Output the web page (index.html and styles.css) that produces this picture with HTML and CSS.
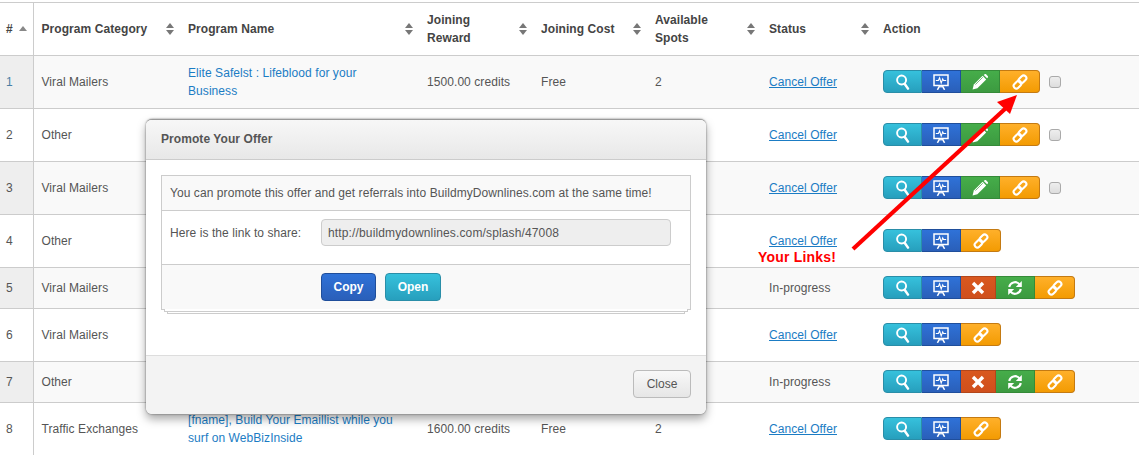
FILE: index.html
```html
<!DOCTYPE html>
<html lang="en">
<head>
<meta charset="utf-8">
<title>Promote Your Offer</title>
<link rel="stylesheet" href="styles.css">
</head>
<body>
<svg class="defs" width="0" height="0" aria-hidden="true">
  <symbol id="i-search" viewBox="0 0 16 16"><circle cx="6.6" cy="6" r="4.5" fill="none" stroke="currentColor" stroke-width="1.9"/><path d="M9.6 9.8 13 14.6" stroke="currentColor" stroke-width="2.5" stroke-linecap="round"/></symbol>
  <symbol id="i-board" viewBox="0 0 16 16"><path d="M1 .9h14v10.6H1z" fill="none" stroke="currentColor" stroke-width="1.5"/><path d="M2.8 6.5h2.6l1.2-2.6 1.6 5.2 1.5-4.2.8 1.6h2.7" fill="none" stroke="currentColor" stroke-width="1.1"/><path d="M8 11.5v2M6.6 12 4.4 15.8M9.4 12l2.2 3.8" stroke="currentColor" stroke-width="1.5"/></symbol>
  <symbol id="i-pencil" viewBox="0 0 16 16"><path d="M.6 15.4 1.8 10.6 10.6 1.8 14.2 5.4 5.4 14.2z" fill="currentColor"/><path d="M11.7.9 12.6.2a1.2 1.2 0 0 1 1.5.1l1.6 1.6a1.2 1.2 0 0 1 .1 1.5l-.7.9z" fill="currentColor"/><path d="M3.4 10.6 10.8 3.2" stroke="#3f9f43" stroke-width=".7"/></symbol>
  <symbol id="i-link" viewBox="0 0 16 16"><g fill="none" stroke="currentColor" stroke-width="2.1"><rect x="6.2" y="2.6" width="8.6" height="5.4" rx="2.7" transform="rotate(-45 10.5 5.3)"/><rect x="1.2" y="8" width="8.6" height="5.4" rx="2.7" transform="rotate(-45 5.5 10.7)"/></g></symbol>
  <symbol id="i-x" viewBox="0 0 16 16"><path d="M3 3l10 10M13 3 3 13" stroke="currentColor" stroke-width="3.4"/></symbol>
  <symbol id="i-sync" viewBox="0 0 16 16"><path d="M2.2 7a5.9 5.9 0 0 1 10.2-2.8" fill="none" stroke="currentColor" stroke-width="2.1"/><path d="M14.8 1V7H8.8z" fill="currentColor"/><path d="M13.8 9a5.9 5.9 0 0 1-10.2 2.8" fill="none" stroke="currentColor" stroke-width="2.1"/><path d="M1.2 15V9H7.2z" fill="currentColor"/></symbol>
</svg>

<table class="offers">
  <colgroup>
    <col class="c-num"><col class="c-cat"><col class="c-name"><col class="c-std"><col class="c-std"><col class="c-std"><col class="c-std"><col class="c-act">
  </colgroup>
  <thead>
    <tr class="tall">
      <th class="num"><span class="head">#<i class="sort up"></i></span></th>
      <th><span class="head">Program Category<i class="sort"></i></span></th>
      <th><span class="head">Program Name<i class="sort"></i></span></th>
      <th><span class="head">Joining<br>Reward<i class="sort"></i></span></th>
      <th><span class="head">Joining Cost<i class="sort"></i></span></th>
      <th><span class="head">Available<br>Spots<i class="sort"></i></span></th>
      <th><span class="head">Status<i class="sort"></i></span></th>
      <th>Action</th>
    </tr>
  </thead>
  <tbody>
    <tr class="tall odd">
      <td class="num first">1</td><td>Viral Mailers</td>
      <td><a class="name" href="#">Elite Safelst : Lifeblood for your Business</a></td>
      <td>1500.00 credits</td><td>Free</td><td>2</td>
      <td><a class="cancel" href="#">Cancel Offer</a></td>
      <td><div class="actions"><div class="group">
        <span class="btn info"><svg><use href="#i-search"/></svg></span><span class="btn blue"><svg><use href="#i-board"/></svg></span><span class="btn green"><svg><use href="#i-pencil"/></svg></span><span class="btn orange"><svg><use href="#i-link"/></svg></span>
      </div><input class="check" type="checkbox"></div></td>
    </tr>
    <tr class="tall">
      <td class="num">2</td><td>Other</td><td></td><td></td><td></td><td></td>
      <td><a class="cancel" href="#">Cancel Offer</a></td>
      <td><div class="actions"><div class="group">
        <span class="btn info"><svg><use href="#i-search"/></svg></span><span class="btn blue"><svg><use href="#i-board"/></svg></span><span class="btn green"><svg><use href="#i-pencil"/></svg></span><span class="btn orange"><svg><use href="#i-link"/></svg></span>
      </div><input class="check" type="checkbox"></div></td>
    </tr>
    <tr class="tall odd">
      <td class="num">3</td><td>Viral Mailers</td><td></td><td></td><td></td><td></td>
      <td><a class="cancel" href="#">Cancel Offer</a></td>
      <td><div class="actions"><div class="group">
        <span class="btn info"><svg><use href="#i-search"/></svg></span><span class="btn blue"><svg><use href="#i-board"/></svg></span><span class="btn green"><svg><use href="#i-pencil"/></svg></span><span class="btn orange"><svg><use href="#i-link"/></svg></span>
      </div><input class="check" type="checkbox"></div></td>
    </tr>
    <tr class="tall">
      <td class="num">4</td><td>Other</td><td></td><td></td><td></td><td></td>
      <td><a class="cancel" href="#">Cancel Offer</a></td>
      <td><div class="actions"><div class="group">
        <span class="btn info"><svg><use href="#i-search"/></svg></span><span class="btn blue"><svg><use href="#i-board"/></svg></span><span class="btn orange"><svg><use href="#i-link"/></svg></span>
      </div></div></td>
    </tr>
    <tr class="short odd">
      <td class="num">5</td><td>Viral Mailers</td><td></td><td></td><td></td><td></td>
      <td>In-progress</td>
      <td><div class="actions"><div class="group">
        <span class="btn info"><svg><use href="#i-search"/></svg></span><span class="btn blue"><svg><use href="#i-board"/></svg></span><span class="btn red"><svg><use href="#i-x"/></svg></span><span class="btn green"><svg><use href="#i-sync"/></svg></span><span class="btn orange"><svg><use href="#i-link"/></svg></span>
      </div></div></td>
    </tr>
    <tr class="tall">
      <td class="num">6</td><td>Viral Mailers</td><td></td><td></td><td></td><td></td>
      <td><a class="cancel" href="#">Cancel Offer</a></td>
      <td><div class="actions"><div class="group">
        <span class="btn info"><svg><use href="#i-search"/></svg></span><span class="btn blue"><svg><use href="#i-board"/></svg></span><span class="btn orange"><svg><use href="#i-link"/></svg></span>
      </div></div></td>
    </tr>
    <tr class="short odd">
      <td class="num">7</td><td>Other</td><td></td><td></td><td></td><td></td>
      <td>In-progress</td>
      <td><div class="actions"><div class="group">
        <span class="btn info"><svg><use href="#i-search"/></svg></span><span class="btn blue"><svg><use href="#i-board"/></svg></span><span class="btn red"><svg><use href="#i-x"/></svg></span><span class="btn green"><svg><use href="#i-sync"/></svg></span><span class="btn orange"><svg><use href="#i-link"/></svg></span>
      </div></div></td>
    </tr>
    <tr class="tall">
      <td class="num">8</td><td>Traffic Exchanges</td>
      <td><a class="name" href="#">[fname], Build Your Emaillist while you surf on WebBizInside</a></td>
      <td>1600.00 credits</td><td>Free</td><td>2</td>
      <td><a class="cancel" href="#">Cancel Offer</a></td>
      <td><div class="actions"><div class="group">
        <span class="btn info"><svg><use href="#i-search"/></svg></span><span class="btn blue"><svg><use href="#i-board"/></svg></span><span class="btn orange"><svg><use href="#i-link"/></svg></span>
      </div></div></td>
    </tr>
  </tbody>
</table>

<div class="modal">
  <div class="modal-head">Promote Your Offer</div>
  <div class="modal-body">
    <div class="panel">
      <div class="panel-head">You can promote this offer and get referrals into BuildmyDownlines.com at the same time!</div>
      <div class="panel-row">
        <label class="share-label" for="share">Here is the link to share:</label>
        <input id="share" class="share" type="text" readonly value="http://buildmydownlines.com/splash/47008">
      </div>
      <div class="panel-foot">
        <button class="pbtn copy" type="button">Copy</button>
        <button class="pbtn open" type="button">Open</button>
      </div>
    </div>
  </div>
  <div class="modal-foot"><button class="close" type="button">Close</button></div>
</div>

<svg class="arrow" width="200" height="170" viewBox="0 0 200 170" aria-hidden="true">
  <path d="M3 155 156 14" stroke="#f00" stroke-width="4.2"/>
  <path d="M167 1 160 20 147 8z" fill="#f00"/>
</svg>
<div class="your-links">Your Links!</div>
</body>
</html>
```
FILE: styles.css
```css
html, body { margin: 0; padding: 0; height: 455px; overflow: hidden; background: #fff; }
body { position: relative; font-family: "Liberation Sans", Arial, sans-serif; font-size: 12px; line-height: 18px; color: #555; letter-spacing: .07px; }
.defs { position: absolute; }
.offers { margin-top: 2px; width: 1139px; table-layout: fixed; border-collapse: collapse; }
.c-num { width: 33px; }
.c-cat { width: 147px; }
.c-name { width: 239px; }
.c-std { width: 114px; }
.offers th, .offers td { border-top: 1px solid #ccc; border-bottom: 1px solid #ccc; padding: 0 8px; text-align: left; vertical-align: middle; }
.offers th { font-weight: bold; color: #444; }
.offers th.num, .offers td.num { border-right: 1px solid #ccc; padding: 0 0 0 6px; }
.tall { height: 53px; }
.short { height: 41px; }
.odd td { background: #f9f9f9; }
.odd td.num { background: #eee; }
.offers td.first { color: #4a7fa5; }
.head { display: block; position: relative; }
.sort { position: absolute; right: -2px; top: 50%; width: 8px; height: 12px; margin-top: -6px; }
.sort::before, .sort::after { content: ""; position: absolute; left: 0; border-left: 4px solid transparent; border-right: 4px solid transparent; }
.sort::before { top: 0; border-bottom: 5px solid #777; }
.sort::after { bottom: 0; border-top: 5px solid #777; }
.sort.up { right: 6px; }
.sort.up::before { top: 3px; border-bottom-color: #888; }
.sort.up::after { display: none; }
.name { display: block; max-width: 210px; color: #1b7cc4; text-decoration: none; }
.cancel { color: #1b7cc4; text-decoration: underline; }
.actions { display: flex; align-items: center; margin-top: -1px; }
.group { display: flex; height: 23px; }
.btn { box-sizing: border-box; width: 39px; height: 23px; display: flex; align-items: center; justify-content: center; color: #fff; border: 1px solid; border-left-width: 0; }
.btn:first-child { border-left-width: 1px; border-radius: 4px 0 0 4px; }
.btn:last-child { width: 40px; border-radius: 0 4px 4px 0; }
.btn svg { width: 16px; height: 16px; }
.info { background: linear-gradient(#36c1dc, #279fbd); border-color: #2a8ea8; }
.blue { background: linear-gradient(#2f72d8, #2a5fb9); border-color: #1f4e9b; }
.green { background: linear-gradient(#46ad4a, #3c9a40); border-color: #358a38; }
.orange { background: linear-gradient(#ffb02a, #f39b02); border-color: #c47a12; }
.red { width: 35px; background: linear-gradient(#d9581f, #cf4f1c); border-color: #b2461a; }
.check { appearance: none; box-sizing: border-box; width: 12px; height: 12px; margin: 1px 0 0 9px; border: 1px solid #aaa; border-radius: 3px; background: linear-gradient(#eee, #ddd); }

.modal { position: absolute; left: 146px; top: 119px; box-sizing: border-box; width: 560px; height: 295px; display: flex; flex-direction: column; background: #fff; border-radius: 6px; border-top: 1px solid #999; box-shadow: 0 0 2px rgba(0, 0, 0, .55), 0 5px 10px rgba(0, 0, 0, .35); overflow: hidden; }
.modal-head { box-sizing: border-box; height: 40px; padding: 0 15px 2px; display: flex; align-items: center; font-weight: bold; color: #555; background: linear-gradient(#f7f7f7, #e8e8e8); border-bottom: 1px solid #ccc; }
.modal-body { flex: 1; padding: 15px 15px 0; }
.panel { box-sizing: border-box; height: 135px; border: 1px solid #ccc; background: #fff; display: flex; flex-direction: column; position: relative; }
.panel::before, .panel::after { content: ""; position: absolute; box-sizing: border-box; border: 1px solid #ccc; border-top: 0; background: #fff; }
.panel::before { left: 2px; right: 2px; bottom: -3px; height: 3px; z-index: 1; }
.panel::after { left: 5px; right: 5px; bottom: -5px; height: 3px; }
.panel-head { box-sizing: border-box; height: 35px; padding: 0 8px; display: flex; align-items: center; background: #f9f9f9; border-bottom: 1px solid #ccc; }
.panel-row { box-sizing: border-box; height: 53px; padding: 8px 0 0 8px; display: flex; gap: 20px; }
.share-label { flex: none; line-height: 28px; width: 131px; white-space: nowrap; }
.share { flex: none; box-sizing: border-box; width: 350px; height: 27px; padding: 0 6px; font: inherit; letter-spacing: .14px; color: #555; background: #eee; border: 1px solid #ccc; border-radius: 4px; outline: 0; }
.panel-foot { flex: 1; display: flex; gap: 9px; padding: 8px 0 0 159px; background: #f9f9f9; border-top: 1px solid #ccc; }
.pbtn { box-sizing: border-box; height: 28px; padding: 0; font: bold 12px/1 "Liberation Sans", Arial, sans-serif; color: #fff; border: 1px solid; border-radius: 4px; }
.copy { width: 55px; background: linear-gradient(#2f72d8, #2a5fb9); border-color: #1f4e9b; }
.open { width: 56px; background: linear-gradient(#36c1dc, #279fbd); border-color: #2a8ea8; }
.modal-foot { box-sizing: border-box; height: 59px; padding: 14px 15px 0 0; display: flex; justify-content: flex-end; align-items: flex-start; background: #f3f3f3; border-top: 1px solid #ddd; }
.close { box-sizing: border-box; width: 58px; height: 28px; padding: 0; font: 12px/1 "Liberation Sans", Arial, sans-serif; color: #555; background: linear-gradient(#f8f8f8, #e6e6e6); border: 1px solid #bbb; border-radius: 4px; }

.arrow { position: absolute; left: 850px; top: 94px; }
.your-links { position: absolute; left: 758px; top: 248px; font-size: 14px; font-weight: bold; color: #f00; letter-spacing: .2px; }
```
